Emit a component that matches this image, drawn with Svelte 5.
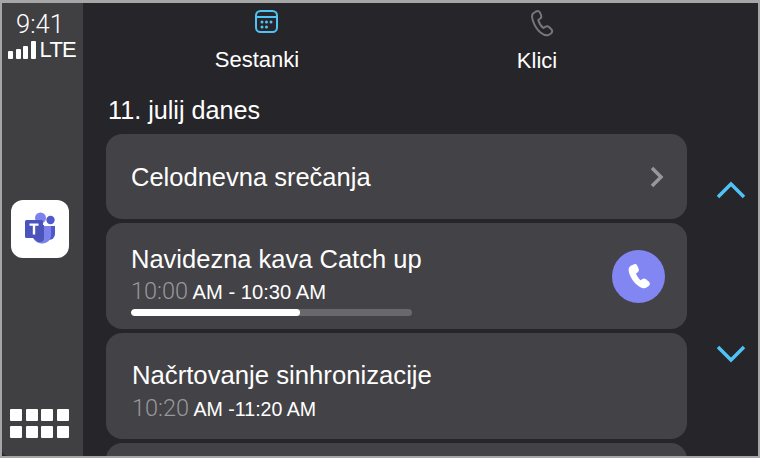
<script>
	const bars = [8, 10, 13, 18];
	const dots = Array.from({ length: 8 });
</script>

<div class="frame">
	<aside class="side">
		<div class="status">
			<div class="clock">9:41</div>
			<div class="signal">
				<span class="bars">
					{#each bars as h}
						<i style="height: {h}px"></i>
					{/each}
				</span>
				<span class="lte">LTE</span>
			</div>
		</div>
		<div class="app-icon">
			<svg width="58" height="58" viewBox="0 0 58 58">
				<circle cx="29.500" cy="18" r="5.500" fill="#7b83eb" />
				<circle cx="39.500" cy="20" r="4.200" fill="#5059c9" />
				<path d="M34 26h10v8a6 6 0 0 1-6 6h-4z" fill="#5059c9" />
				<path d="M22 26h18v10a8 8 0 0 1-8 7.500h-2a8 8 0 0 1-8-7.500z" fill="#7b83eb" />
				<path d="M22 25h11v13a4 4 0 0 1-4 4h-2l-5-4z" fill="#4e55b8" />
				<rect x="14" y="20" width="18" height="18" rx="1.500" fill="#4b53bc" />
				<path d="M18.500 23.500h9v2.200h-3.300V34.500h-2.400v-8.800h-3.300z" fill="#fff" />
			</svg>
		</div>
		<div class="grid-icon">
			{#each dots as _}
				<i></i>
			{/each}
		</div>
	</aside>

	<main class="main">
		<div class="content">
			<nav class="tabs">
				<div class="tab first">
					<svg class="tab-icon" width="25" height="25" viewBox="0 0 25 25" fill="none" stroke="#4fc3f7" stroke-width="2">
						<rect x="2" y="2" width="21" height="21" rx="4.500" />
						<path d="M2 8h21" />
						<g fill="#4fc3f7" stroke="none">
							<circle cx="8" cy="13" r="1.500" /><circle cx="12.500" cy="13" r="1.500" /><circle cx="17" cy="13" r="1.500" />
							<circle cx="8" cy="18" r="1.500" /><circle cx="12.500" cy="18" r="1.500" />
						</g>
					</svg>
					<span>Sestanki</span>
				</div>
				<div class="tab second">
					<svg class="tab-icon" width="26" height="30" viewBox="0 0 26 30" fill="none" stroke="#77767a" stroke-width="2" stroke-linejoin="round">
						<path d="M7 3.500 4 5.500C2.500 7 3 10 4 13c1.500 4.500 4 8.500 7.500 11.500 2.500 2 5.500 3.500 8 2.500l2.500-1.500c1.500-1.200 1.500-3 .5-4l-2.500-2.500c-1.200-1-2.500-1-3.500-.3l-2 1.300c-2.500-1.800-4.500-5-5.200-8l2-1.500c1-.8 1.200-2.200.7-3.500L11 4.500C10 3 8.500 2.700 7 3.500z" />
					</svg>
					<span>Klici</span>
				</div>
			</nav>

			<h2 class="date">11. julij danes</h2>

			<div class="list">
				<div class="card allday">
					<span class="title">Celodnevna srečanja</span>
					<svg width="14" height="22" viewBox="0 0 14 22" fill="none" stroke="#98979a" stroke-width="3.500">
						<path d="M2 2l9 9-9 9" />
					</svg>
				</div>
				<div class="card meeting">
					<div class="info">
						<div class="title">Navidezna kava Catch up</div>
						<div class="time"><span class="start">10:00</span> AM - 10:30 AM</div>
						<div class="progress"><div class="fill" style="width: 60%"></div></div>
					</div>
					<div class="call">
						<svg width="31" height="31" viewBox="0 0 24 24">
							<path d="M8.700 2.500 6 3.600C4.300 4.600 4 6.500 4.700 9c1.200 4 4 8 7.300 10.300 2.300 1.700 4.600 2.300 6.200 1.300l1.700-1.200c1.200-1 1.200-2.500.2-3.400l-2.300-1.900c-.9-.7-2-.7-2.800-.1l-1.300.9c-1.500-1-3-3.300-3.600-5.200l1.300-.9c.9-.7 1.100-1.800.7-2.800l-1.200-2.700c-.5-1-1.300-1.300-2.200-.8z" fill="#fff" />
						</svg>
					</div>
				</div>
				<div class="card meeting plan">
					<div class="info">
						<div class="title">Načrtovanje sinhronizacije</div>
						<div class="time"><span class="start">10:20</span> AM -11:20 AM</div>
					</div>
				</div>
				<div class="card"></div>
			</div>
		</div>

		<div class="arrows">
			<svg width="30" height="18" viewBox="0 0 30 18" fill="none" stroke="#4fc3f7" stroke-width="3.500">
				<path d="M2 16 15 3l13 13" />
			</svg>
			<svg width="30" height="18" viewBox="0 0 30 18" fill="none" stroke="#4fc3f7" stroke-width="3.500">
				<path d="M2 2l13 13L28 2" />
			</svg>
		</div>
	</main>
</div>

<style>
	:global(body) {
		margin: 0;
		background: #a6a6a6;
	}

	.frame {
		box-sizing: border-box;
		width: 760px;
		height: 458px;
		border: solid #a6a6a6;
		border-width: 3px 2px 2px 2px;
		background: #26252a;
		display: flex;
		overflow: hidden;
		font-family: "Liberation Sans", Arial, sans-serif;
		color: #fff;
	}

	.side {
		width: 81px;
		flex: none;
		background: #403f42;
		border-bottom-left-radius: 6px;
		display: flex;
		flex-direction: column;
		align-items: center;
		padding: 7px 0 18px;
		box-sizing: border-box;
	}

	.status {
		display: flex;
		flex-direction: column;
		align-items: center;
	}

	.clock {
		font-size: 25.500px;
		line-height: 28px;
		font-family: Roboto, "Liberation Sans", sans-serif;
		font-weight: 300;
		margin-right: 5px;
	}

	.signal {
		display: flex;
		align-items: flex-end;
		gap: 4px;
		margin: 1px 1px 0 0;
	}

	.bars {
		display: flex;
		align-items: flex-end;
		gap: 2.500px;
		padding-bottom: 2px;
	}

	.bars i {
		display: block;
		width: 5px;
		background: #fff;
		border-radius: 1px;
	}

	.lte {
		font-size: 22px;
		line-height: 22px;
		letter-spacing: -0.800px;
	}

	.app-icon {
		width: 58px;
		height: 58px;
		margin: 139px 5px 0 0;
		border-radius: 12px;
		background: #fff;
	}

	.grid-icon {
		margin: auto 6px 0 0;
		display: grid;
		grid-template-columns: repeat(4, 12px);
		gap: 5px 3.600px;
	}

	.grid-icon i {
		display: block;
		height: 12px;
		background: #fff;
		border-radius: 1px;
	}

	.main {
		flex: 1;
		background: #26252a;
		display: flex;
		min-width: 0;
	}

	.content {
		width: 604px;
		flex: none;
		box-sizing: border-box;
		padding-left: 23px;
		display: flex;
		flex-direction: column;
		min-width: 0;
	}

	.tabs {
		display: flex;
		height: 81px;
		flex: none;
	}

	.tab {
		display: flex;
		flex-direction: column;
		font-size: 22px;
		align-items: center;
	}

	.tab.first {
		margin-left: 109px;
		width: 84px;
	}

	.tab.second {
		margin-left: 218px;
		width: 40px;
	}

	.tab-icon {
		flex: none;
		margin-left: 18px;
		margin-top: 6px;
	}

	.tab.second .tab-icon {
		margin-left: 10px;
		margin-top: 5px;
	}

	.tab span {
		margin-top: 14px;
		line-height: 23px;
	}

	.tab.second span {
		margin-top: 11px;
	}

	.date {
		margin: 12px 0 0 2px;
		font-size: 25.200px;
		line-height: 28px;
		font-weight: 400;
		height: 38px;
		flex: none;
	}

	.list {
		display: flex;
		flex-direction: column;
		gap: 4px;
	}

	.card {
		width: 581px;
		height: 106px;
		flex: none;
		box-sizing: border-box;
		background: #434246;
		border-radius: 16px;
		padding: 0 25px;
		display: flex;
		align-items: center;
		justify-content: space-between;
	}

	.card.allday {
		height: 85px;
		padding-right: 23px;
	}

	.title {
		font-size: 25.500px;
		line-height: 28px;
		white-space: nowrap;
	}

	.meeting {
		padding-right: 22px;
	}

	.info {
		display: flex;
		flex-direction: column;
		width: 281px;
		align-self: flex-start;
		padding-top: 22px;
	}

	.plan .info {
		padding-top: 28px;
		margin-left: 1px;
	}

	.plan .title {
		font-size: 25.700px;
	}

	.plan .time {
		font-size: 19.600px;
		margin-top: 5px;
	}

	.time {
		font-size: 20.200px;
		line-height: 28px;
		margin-top: 4px;
		white-space: nowrap;
	}

	.start {
		font-size: 23.500px;
		font-family: Roboto, "Liberation Sans", sans-serif;
		font-weight: 300;
		color: #98979a;
	}

	.progress {
		height: 7px;
		margin-top: 3px;
		border-radius: 3.500px;
		background: #69686b;
		overflow: hidden;
	}

	.fill {
		height: 100%;
		background: #fff;
		border-radius: 3.500px;
	}

	.call {
		width: 53px;
		height: 53px;
		border-radius: 50%;
		background: #8186f2;
		display: flex;
		align-items: center;
		justify-content: center;
	}

	.arrows {
		flex: 1;
		display: flex;
		flex-direction: column;
		align-items: center;
		padding: 178px 0 0 17px;
		gap: 146px;
	}
</style>
